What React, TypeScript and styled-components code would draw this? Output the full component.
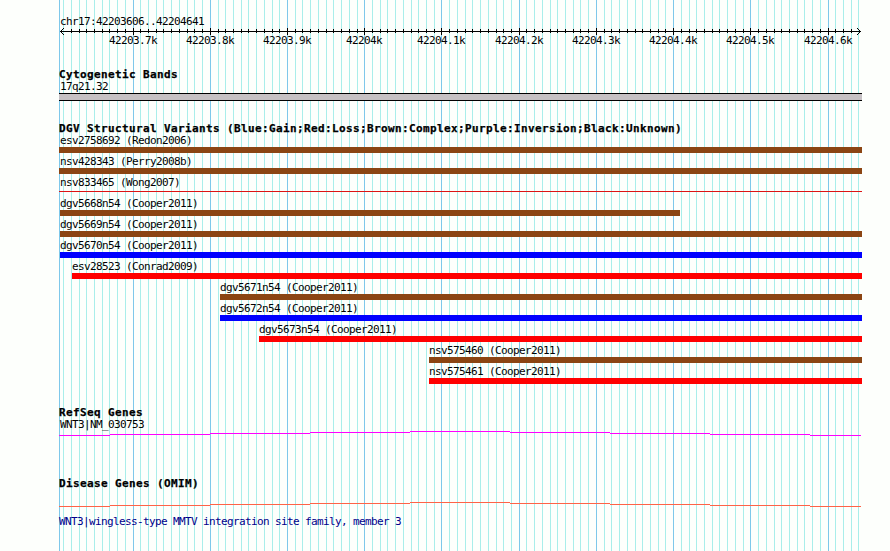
import { FC } from 'react';
import styled, { createGlobalStyle } from 'styled-components';

const GlobalStyle = createGlobalStyle`
  body {
    margin: 0;
    background: #fdfffc;
  }
`;

// region shown, in base pairs
const START = 42203606;
const END = 42204641;
const PANEL_WIDTH = 803;
const PX_PER_BP = 800 / (END - START + 1);

const toX = (bp: number) => Math.round(1 + (bp - START) * PX_PER_BP);

const COLORS = {
  complex: '#8b4513',
  gain: '#0000ff',
  loss: '#ff0000',
};

const Page = styled.div`
  display: flex;
  height: 551px;
  padding-left: 59px;
  box-sizing: border-box;
  overflow: hidden;
  font-family: 'DejaVu Sans Mono', 'Liberation Mono', monospace;
  color: #000;
`;

const Panel = styled.div`
  position: relative;
  width: ${PANEL_WIDTH}px;
`;

const GridLines = styled.svg`
  position: absolute;
  top: 0;
  left: 0;
  display: block;
`;

const Tracks = styled.div`
  position: relative;
  display: flex;
  flex-direction: column;
`;

const RulerBox = styled.header`
  padding-top: 15px;
  height: 53px;
`;

const RulerSvg = styled.svg`
  display: block;
  overflow: visible;
  text {
    font-size: 11px;
    letter-spacing: -0.62px;
  }
`;

const Track = styled.section<{ $height: number }>`
  height: ${(p) => p.$height}px;
`;

const TrackTitle = styled.h2`
  margin: 0;
  height: 12px;
  font-size: 11px;
  line-height: 14px;
  font-weight: bold;
  letter-spacing: 0.378px;
  -webkit-text-stroke: 0.25px #000;
  white-space: nowrap;
`;

const Label = styled.div<{ $indent?: number; $color?: string }>`
  height: 12px;
  padding-left: ${(p) => p.$indent ?? 1}px;
  font-size: 11px;
  line-height: 14px;
  letter-spacing: -0.622px;
  white-space: nowrap;
  color: ${(p) => p.$color ?? '#000'};
`;

const Band = styled.div`
  height: 6px;
  margin-top: 1px;
  border: solid #000;
  border-width: 1px 0;
  background: #c6c1c4;
`;

const Variant = styled.div<{ $start: number }>`
  height: 21px;
  margin-left: ${(p) => p.$start}px;
`;

const Bar = styled.div<{ $color: string; $width: number; $thin?: boolean }>`
  width: ${(p) => p.$width}px;
  height: ${(p) => (p.$thin ? 1 : 6)}px;
  margin-top: ${(p) => (p.$thin ? 3 : 1)}px;
  background: ${(p) => p.$color};
`;

const GeneSvg = styled.svg`
  display: block;
`;

type VariantData = {
  name: string;
  start: number;
  end?: number;
  color: string;
  thin?: boolean;
};

const variants: VariantData[] = [
  { name: 'esv2758692 (Redon2006)', start: 0, color: COLORS.complex },
  { name: 'nsv428343 (Perry2008b)', start: 0, color: COLORS.complex },
  { name: 'nsv833465 (Wong2007)', start: 0, color: '#dc1414', thin: true },
  { name: 'dgv5668n54 (Cooper2011)', start: 1, end: 621, color: COLORS.complex },
  { name: 'dgv5669n54 (Cooper2011)', start: 1, color: COLORS.complex },
  { name: 'dgv5670n54 (Cooper2011)', start: 1, color: COLORS.gain },
  { name: 'esv28523 (Conrad2009)', start: 13, color: COLORS.loss },
  { name: 'dgv5671n54 (Cooper2011)', start: 161, color: COLORS.complex },
  { name: 'dgv5672n54 (Cooper2011)', start: 161, color: COLORS.gain },
  { name: 'dgv5673n54 (Cooper2011)', start: 200, color: COLORS.loss },
  { name: 'nsv575460 (Cooper2011)', start: 370, color: COLORS.complex },
  { name: 'nsv575461 (Cooper2011)', start: 370, color: COLORS.loss },
];

const ticks: { x: number; bp: number; major: boolean }[] = [];
for (let bp = 42203610; bp <= END; bp += 10) {
  ticks.push({ x: toX(bp), bp, major: bp % 100 === 0 });
}

const Grid: FC = () => (
  <GridLines width={PANEL_WIDTH} height={551} shapeRendering="crispEdges">
    <rect x={0} y={0} width={1} height={551} fill="#7ec8ea" />
    {ticks.map((t) => (
      <rect key={t.bp} x={t.x} y={0} width={1} height={551} fill={t.major ? '#7ec8ea' : '#a9eeea'} />
    ))}
  </GridLines>
);

const Ruler: FC = () => (
  <RulerBox>
    <Label>chr17:42203606..42204641</Label>
    <RulerSvg width={PANEL_WIDTH} height={22}>
      <g shapeRendering="crispEdges">
        <rect x={1} y={4} width={801} height={1} />
        {/* the first and last tick fall under the arrow heads */}
        {ticks.slice(1, -1).map((t) => (
          <rect
            key={t.bp}
            x={t.x}
            y={t.major ? 1 : 2}
            width={1}
            height={t.major ? 7 : 4}
          />
        ))}
        {[1, 2, 3].map((d) => (
          <g key={d}>
            <rect x={1 + d} y={4 - d} width={1} height={1} />
            <rect x={1 + d} y={4 + d} width={1} height={1} />
            <rect x={801 - d} y={4 - d} width={1} height={1} />
            <rect x={801 - d} y={4 + d} width={1} height={1} />
          </g>
        ))}
      </g>
      {ticks
        .filter((t) => t.major)
        .map((t) => {
          const label = `${t.bp / 1000}k`;
          return (
            <text key={t.bp} x={t.x - label.length * 3} y={17}>
              {label}
            </text>
          );
        })}
    </RulerSvg>
  </RulerBox>
);

// the line climbs one pixel every 100px up to the middle and drops again
const Gene: FC<{ color: string }> = ({ color }) => {
  const edges = [0, 51, 151, 251, 351, 451, 551, 651, 751, 802];
  return (
    <GeneSvg width={PANEL_WIDTH} height={5} shapeRendering="crispEdges">
      {edges.slice(1).map((end, i) => (
        <rect
          key={end}
          x={edges[i]}
          y={Math.abs(4 - i)}
          width={end - edges[i]}
          height={1}
          fill={color}
        />
      ))}
    </GeneSvg>
  );
};

const GeneGap = styled.div<{ $size: number }>`
  height: ${(p) => p.$size}px;
`;

export default function App() {
  return (
    <>
      <GlobalStyle />
      <Page>
        <Panel>
          <Grid />
          <Tracks>
            <Ruler />
            <Track $height={54}>
              <TrackTitle>Cytogenetic Bands</TrackTitle>
              <Label>17q21.32</Label>
              <Band />
            </Track>
            <Track $height={284}>
              <TrackTitle>
                DGV Structural Variants (Blue:Gain;Red:Loss;Brown:Complex;Purple:Inversion;Black:Unknown)
              </TrackTitle>
              {variants.map((v) => (
                <Variant key={v.name} $start={v.start}>
                  <Label $indent={v.start === 0 ? 1 : 0}>{v.name}</Label>
                  <Bar
                    $color={v.color}
                    $thin={v.thin}
                    $width={(v.end ?? PANEL_WIDTH) - v.start}
                  />
                </Variant>
              ))}
            </Track>
            <Track $height={71}>
              <TrackTitle>RefSeq Genes</TrackTitle>
              <Label>WNT3|NM_030753</Label>
              <GeneGap $size={1} />
              <Gene color="#ff00ff" />
            </Track>
            <Track $height={74}>
              <TrackTitle>Disease Genes (OMIM)</TrackTitle>
              <GeneGap $size={13} />
              <Gene color="#ff6347" />
              <GeneGap $size={8} />
              <Label $indent={0} $color="#00008b">
                WNT3|wingless-type MMTV integration site family, member 3
              </Label>
            </Track>
          </Tracks>
        </Panel>
      </Page>
    </>
  );
}
